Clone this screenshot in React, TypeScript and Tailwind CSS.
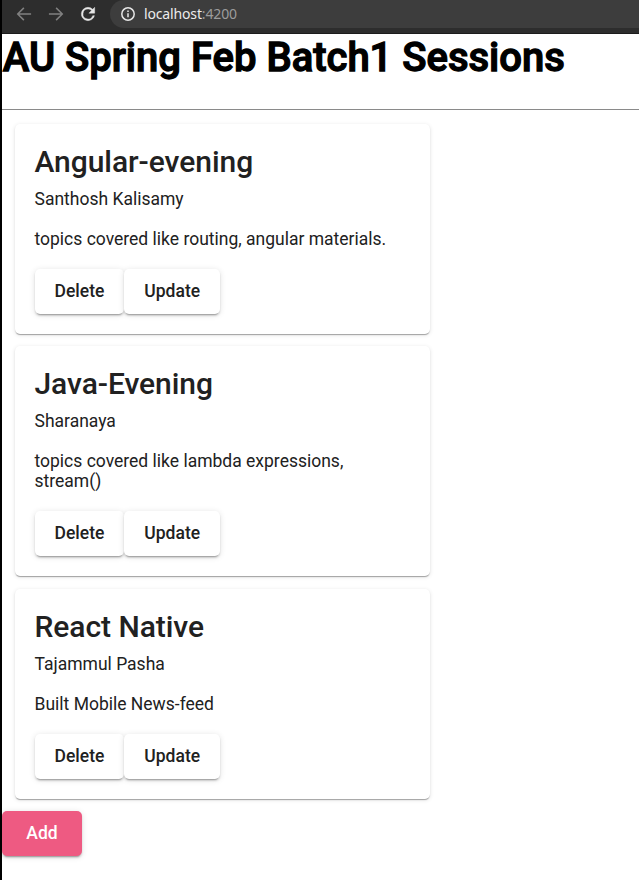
import React from "react";

type Session = { title: string; trainer: string; description: string };

const sessions: Session[] = [
  {
    title: "Angular-evening",
    trainer: "Santhosh Kalisamy",
    description: "topics covered like routing, angular materials.",
  },
  {
    title: "Java-Evening",
    trainer: "Sharanaya",
    description: "topics covered like lambda expressions, stream()",
  },
  {
    title: "React Native",
    trainer: "Tajammul Pasha",
    description: "Built Mobile News-feed",
  },
];

const raised =
  "h-[45px] rounded-[5px] text-[17.5px] leading-[45px] font-medium shadow-[0_3px_1px_-2px_rgba(0,0,0,0.2),0_2px_2px_0_rgba(0,0,0,0.14),0_1px_6px_0_rgba(0,0,0,0.12)]";

function BrowserBar() {
  return (
    <header className="flex h-[34px] items-start border-b border-[#1c1c1c] bg-[#2d2d2d]">
      <svg className="ml-[12px] mt-[4px] h-5 w-5" viewBox="0 0 24 24" fill="#808080">
        <path d="M20.5 11.1H6.6l5.9-5.8L11.2 4l-8 8 8 8 1.3-1.3-5.9-5.8h13.9z" />
      </svg>
      <svg className="ml-[12px] mt-[4px] h-5 w-5" viewBox="0 0 24 24" fill="#808080">
        <path d="M3.5 11.1h13.9l-5.9-5.8L12.8 4l8 8-8 8-1.3-1.3 5.9-5.8H3.5z" />
      </svg>
      <svg
        className="ml-[12px] mt-[4px] h-5 w-5"
        viewBox="0 0 24 24"
        fill="#e6e6e6"
        stroke="#e6e6e6"
        strokeWidth="0.5"
      >
        <path d="M17.65 6.35A7.96 7.96 0 0 0 12 4a8 8 0 1 0 7.73 10h-2.08A6 6 0 1 1 12 6c1.66 0 3.14.69 4.22 1.78L13 11h7V4z" />
      </svg>
      <div className="ml-[12px] flex h-[28px] flex-1 items-center rounded-l-[14px] bg-[#3d3d3d] pl-[10px]">
        <svg className="h-4 w-4" viewBox="0 0 16 16" fill="none" stroke="#e6e6e6" strokeWidth="1.5">
          <circle cx="8" cy="8" r="6.2" />
          <path d="M8 7.2v4.1M8 4.5v1.5" />
        </svg>
        <span className="ml-[8px] font-['Noto_Sans',sans-serif] text-[14px] leading-[28px] tracking-[-0.15px] text-[#ececec]">
          localhost<span className="text-[#9c9c9c]">:4200</span>
        </span>
      </div>
    </header>
  );
}

function SessionCard({ title, trainer, description }: Session) {
  return (
    <article className="w-[415.5px] rounded-[5px] bg-white p-5 text-[17.5px] leading-5 text-[#212121] shadow-[0_2px_1px_-1px_rgba(0,0,0,0.2),0_1px_1px_0_rgba(0,0,0,0.14),0_1px_4px_0_rgba(0,0,0,0.12)]">
      <h2 className="mb-[9px] text-[30px] leading-9 font-medium tracking-[-0.05px]">{title}</h2>
      <p>{trainer}</p>
      <p className="my-5">{description}</p>
      <div className="flex">
        <button className={`${raised} w-[89.4px] bg-white pl-[0.6px]`}>Delete</button>
        <button className={`${raised} w-[96px] bg-white pl-[0.6px]`}>Update</button>
      </div>
    </article>
  );
}

export default function App() {
  return (
    <div className="h-[880px] overflow-hidden border-l-2 border-black bg-white font-[Roboto,sans-serif]">
      <BrowserBar />
      <h1 className="h-[75px] pl-[0.7px] text-[40px] leading-[47px] font-medium whitespace-nowrap text-black [-webkit-text-stroke:1.3px_black]">
        AU Spring Feb Batch1 Sessions
      </h1>
      <hr className="border-t border-[#8a8a8a]" />
      <main className="mt-[14px] ml-[12.5px] flex flex-col gap-[12.3px]">
        {sessions.map((s) => (
          <SessionCard key={s.title} {...s} />
        ))}
      </main>
      <button className={`${raised} mt-[12.4px] w-[80px] bg-[#ee5a82] text-white`}>Add</button>
    </div>
  );
}
